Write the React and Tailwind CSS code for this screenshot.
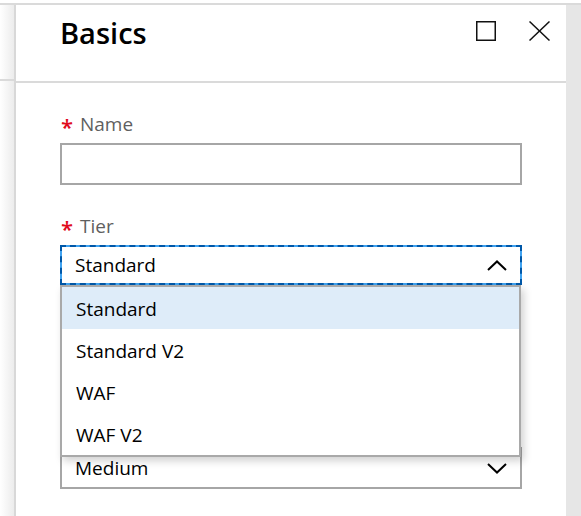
import React from "react";

const font = { fontFamily: '"Segoe UI", "Open Sans", "Noto Sans", sans-serif' };

function ChevronUp() {
  return (
    <svg width="20" height="11" viewBox="0 0 20 11" fill="none">
      <polyline points="1,10 10,1.5 19,10" stroke="#000" strokeWidth="2" />
    </svg>
  );
}

function ChevronDown() {
  return (
    <svg width="20" height="11" viewBox="0 0 20 11" fill="none">
      <polyline points="1,1 10,9.5 19,1" stroke="#000" strokeWidth="2" />
    </svg>
  );
}

function Label({ text }) {
  return (
    <div className="flex items-center h-[28px] mb-[5px] pl-[1px]">
      <span className="w-[19px] text-[22px] leading-none text-[#e00b1c] font-semibold pt-[4px]">*</span>
      <span className="text-[19px] text-[#5f5f5f]">{text}</span>
    </div>
  );
}

export default function App() {
  const tiers = ["Standard", "Standard V2", "WAF", "WAF V2"];

  return (
    <div className="w-[581px] h-[516px] bg-white overflow-hidden flex flex-col" style={font}>
      {/* top strip */}
      <div className="h-[3px] bg-white shrink-0" />
      <div className="h-[2px] bg-[#dadada] shrink-0" />

      <div className="flex flex-1 min-h-0">
        {/* left blade edge */}
        <div className="w-[14px] flex flex-col bg-gradient-to-r from-white to-[#ececec]">
          <div className="h-[76px] border-b-2 border-[#dadada]" />
        </div>
        <div className="w-[2px] bg-[#d8d8d8]" />

        {/* panel */}
        <div className="w-[550px] flex flex-col bg-white">
          <div className="h-[78px] flex justify-between pl-[44px] pr-[16px] border-b-2 border-[#dadada]">
            <h1 className="pt-[8px] h-[48px] leading-[40px] text-[29px] font-semibold text-black">Basics</h1>
            <div className="flex gap-[33px] pt-[16px]">
              <svg width="20" height="20" viewBox="0 0 20 20" fill="none">
                <rect x="0.75" y="0.75" width="18.5" height="18.5" stroke="#111" strokeWidth="1.5" />
              </svg>
              <svg width="21" height="20" viewBox="0 0 21 20" fill="none">
                <line x1="0.5" y1="0.5" x2="20.5" y2="19.5" stroke="#111" strokeWidth="1.5" />
                <line x1="20.5" y1="0.5" x2="0.5" y2="19.5" stroke="#111" strokeWidth="1.5" />
              </svg>
            </div>
          </div>

          <div className="flex flex-col pt-[27px] px-[44px]">
            <div>
              <Label text="Name" />
              <div className="h-[42px] border-2 border-[#a6a6a6] bg-white" />
            </div>

            <div className="relative z-10 mt-[27px]">
              <Label text="Tier" />
              <div className="relative">
                <div className="h-[40px] border-2 border-dashed border-[#0058a8] bg-[#3fa2f0]">
                  <div className="h-full bg-white flex items-center justify-between pl-[13px] pr-[13px]">
                    <span className="text-[19px] text-black">Standard</span>
                    <ChevronUp />
                  </div>
                </div>
                {/* open menu */}
                <div className="absolute top-full left-0 w-[461px] bg-white border-2 border-[#a9a9a9] shadow-[3px_4px_8px_rgba(0,0,0,0.18)]">
                  {tiers.map((t, i) => (
                    <div
                      key={t}
                      className={`h-[42px] flex items-center pl-[14px] pt-[2px] text-[19px] text-black ${
                        i === 0 ? "bg-[#deecf9]" : "bg-white"
                      }`}
                    >
                      {t}
                    </div>
                  ))}
                </div>
              </div>
            </div>

            {/* select partly hidden by the open menu */}
            <div className="mt-[162px] h-[42px] border-2 border-[#a6a6a6] bg-white flex items-center justify-between pl-[13px] pr-[13px]">
              <span className="text-[19px] text-black">Medium</span>
              <ChevronDown />
            </div>
          </div>
        </div>

        {/* right gray */}
        <div className="flex-1 bg-[#e6e6e6]" />
      </div>
    </div>
  );
}
